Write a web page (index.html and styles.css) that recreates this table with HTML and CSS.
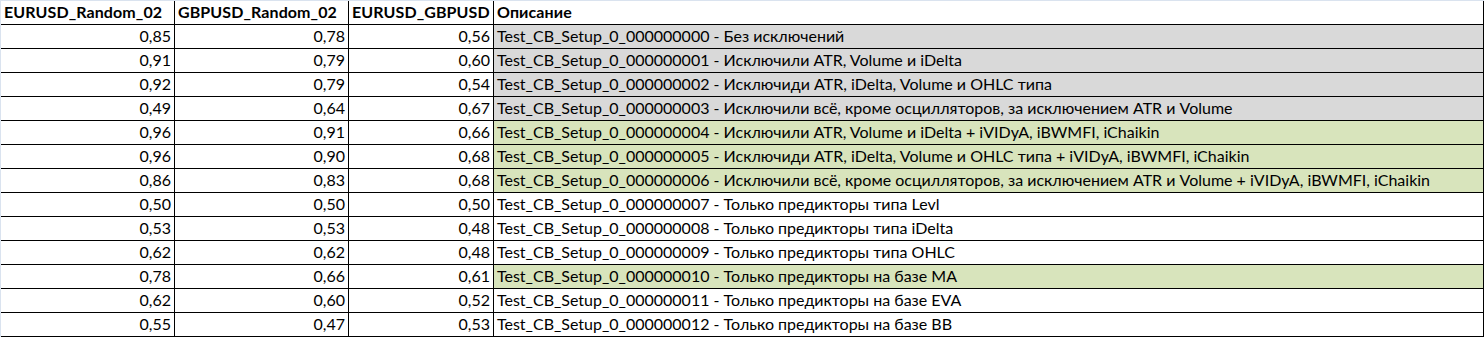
FILE: index.html
```html
<!DOCTYPE html>
<html lang="ru">
<head>
<meta charset="utf-8">
<title>Results</title>
<link rel="stylesheet" href="styles.css">
</head>
<body>
<div class="sheet">
  <div class="row head">
    <div class="c">EURUSD_Random_02</div>
    <div class="c">GBPUSD_Random_02</div>
    <div class="c">EURUSD_GBPUSD</div>
    <div class="c t">Описание</div>
  </div>
  <div class="row grey">
    <div class="c n">0,85</div><div class="c n">0,78</div><div class="c n">0,56</div>
    <div class="c t">Test_CB_Setup_0_000000000 - Без исключений</div>
  </div>
  <div class="row grey">
    <div class="c n">0,91</div><div class="c n">0,79</div><div class="c n">0,60</div>
    <div class="c t">Test_CB_Setup_0_000000001 - Исключили ATR, Volume и iDelta</div>
  </div>
  <div class="row grey">
    <div class="c n">0,92</div><div class="c n">0,79</div><div class="c n">0,54</div>
    <div class="c t">Test_CB_Setup_0_000000002 - Исключиди ATR, iDelta, Volume и OHLC типа</div>
  </div>
  <div class="row grey">
    <div class="c n">0,49</div><div class="c n">0,64</div><div class="c n">0,67</div>
    <div class="c t">Test_CB_Setup_0_000000003 - Исключили всё, кроме осцилляторов, за исключением ATR и Volume</div>
  </div>
  <div class="row green">
    <div class="c n">0,96</div><div class="c n">0,91</div><div class="c n">0,66</div>
    <div class="c t">Test_CB_Setup_0_000000004 - Исключили ATR, Volume и iDelta + iVIDyA, iBWMFI, iChaikin</div>
  </div>
  <div class="row green">
    <div class="c n">0,96</div><div class="c n">0,90</div><div class="c n">0,68</div>
    <div class="c t">Test_CB_Setup_0_000000005 - Исключиди ATR, iDelta, Volume и OHLC типа + iVIDyA, iBWMFI, iChaikin</div>
  </div>
  <div class="row green">
    <div class="c n">0,86</div><div class="c n">0,83</div><div class="c n">0,68</div>
    <div class="c t">Test_CB_Setup_0_000000006 - Исключили всё, кроме осцилляторов, за исключением ATR и Volume + iVIDyA, iBWMFI, iChaikin</div>
  </div>
  <div class="row">
    <div class="c n">0,50</div><div class="c n">0,50</div><div class="c n">0,50</div>
    <div class="c t">Test_CB_Setup_0_000000007 - Только предикторы типа Levl</div>
  </div>
  <div class="row">
    <div class="c n">0,53</div><div class="c n">0,53</div><div class="c n">0,48</div>
    <div class="c t">Test_CB_Setup_0_000000008 - Только предикторы типа iDelta</div>
  </div>
  <div class="row">
    <div class="c n">0,62</div><div class="c n">0,62</div><div class="c n">0,48</div>
    <div class="c t">Test_CB_Setup_0_000000009 - Только предикторы типа OHLC</div>
  </div>
  <div class="row green">
    <div class="c n">0,78</div><div class="c n">0,66</div><div class="c n">0,61</div>
    <div class="c t">Test_CB_Setup_0_000000010 - Только предикторы на базе MA</div>
  </div>
  <div class="row">
    <div class="c n">0,62</div><div class="c n">0,60</div><div class="c n">0,52</div>
    <div class="c t">Test_CB_Setup_0_000000011 - Только предикторы на базе EVA</div>
  </div>
  <div class="row">
    <div class="c n">0,55</div><div class="c n">0,47</div><div class="c n">0,53</div>
    <div class="c t">Test_CB_Setup_0_000000012 - Только предикторы на базе BB</div>
  </div>
</div>
</body>
</html>
```
FILE: styles.css
```css
html, body {
  margin: 0;
  padding: 0;
  background: #ffffff;
}
.sheet {
  width: 1484px;
  box-sizing: border-box;
  border-top: 1px solid #dae3ef;
  border-left: 1px solid #dae3ef;
  font-family: Lato, "Liberation Sans", sans-serif;
  font-size: 16px;
  color: #000;
}
.row {
  display: grid;
  grid-template-columns: 174px 174px 145px 990px;
  height: 24px;
}
.c {
  box-sizing: border-box;
  height: 24px;
  border-right: 1px solid #000;
  border-bottom: 1px solid #000;
  padding: 0 3px 2px 3px;
  display: flex;
  align-items: flex-end;
  white-space: nowrap;
  overflow: hidden;
  line-height: 20px;
}
.n {
  justify-content: flex-end;
}
.head .c {
  font-weight: bold;
  letter-spacing: 0.1px;
}
.grey .t {
  background: #d9d9d9;
}
.green .t {
  background: #d8e4bc;
}
```
